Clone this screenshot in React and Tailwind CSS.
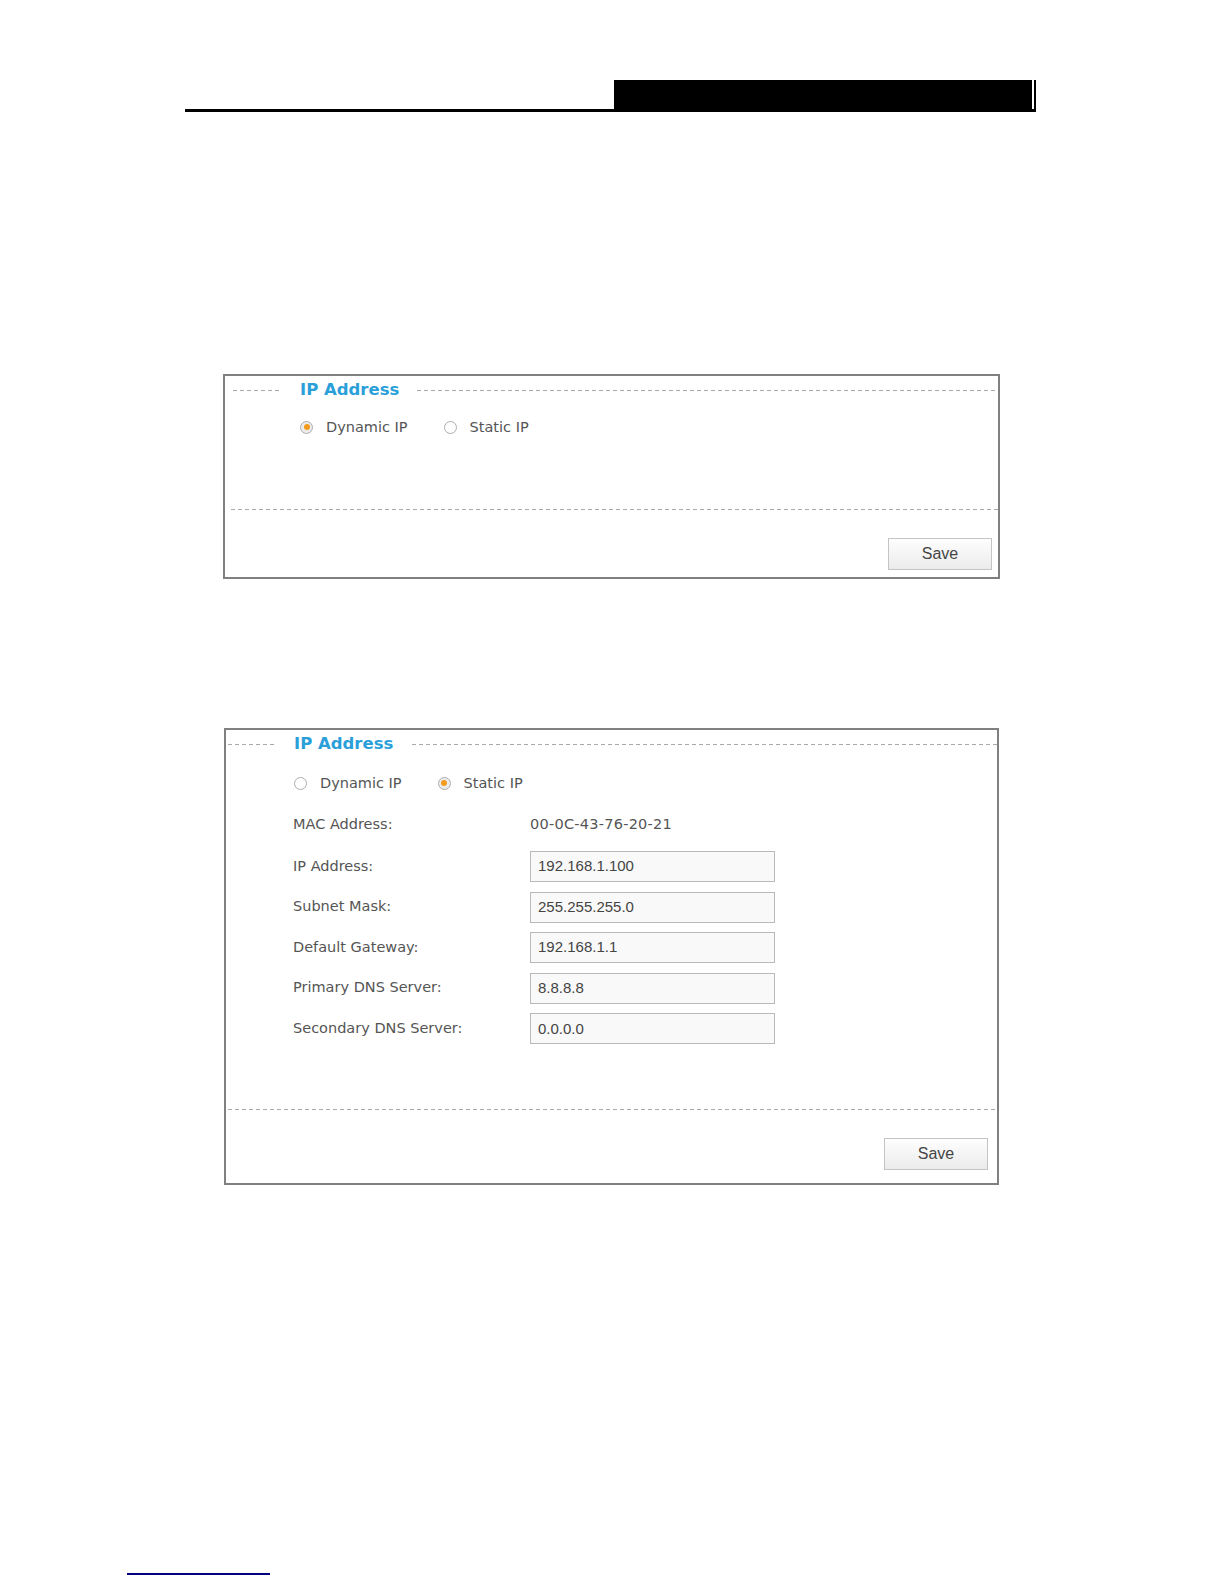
import React from "react";

const dash =
  "h-px bg-[repeating-linear-gradient(90deg,#a9a9a9_0_4px,transparent_4px_7px)]";

function Radio({ checked, label }) {
  return (
    <div className="flex items-center gap-[13px]">
      <span
        className={`flex h-[13px] w-[13px] items-center justify-center rounded-full border border-[#adadad] ${
          checked ? "bg-[#ececec]" : "bg-white"
        }`}
      >
        {checked && <span className="h-[6px] w-[6px] rounded-full bg-[#f29b1d]" />}
      </span>
      <span className="text-[14.5px] leading-5 text-[#555]">{label}</span>
    </div>
  );
}

function TitleBar({ lead, leftGap, title, rightGap }) {
  return (
    <div className="flex h-5 items-center">
      <div className={`${dash} w-[48px]`} style={{ marginLeft: lead }} />
      <span
        className="text-[16.5px] font-bold leading-5 text-[#2b9fd9]"
        style={{ marginLeft: leftGap, marginRight: rightGap }}
      >
        {title}
      </span>
      <div className={`${dash} flex-1`} />
    </div>
  );
}

function SaveButton({ className }) {
  return (
    <button
      className={`h-[32px] w-[104px] border border-[#c4c4c4] bg-gradient-to-b from-[#fefefe] to-[#ebebeb] font-['Liberation_Sans',Arial,sans-serif] text-[16px] text-[#454545] ${className}`}
    >
      Save
    </button>
  );
}

const fields = [
  ["IP Address:", "192.168.1.100"],
  ["Subnet Mask:", "255.255.255.0"],
  ["Default Gateway:", "192.168.1.1"],
  ["Primary DNS Server:", "8.8.8.8"],
  ["Secondary DNS Server:", "0.0.0.0"],
];

export default function App() {
  return (
    <div className="min-h-[1584px] w-[1224px] bg-white pt-[80px] font-['DejaVu_Sans',Verdana,sans-serif]">
      {/* Page header */}
      <div className="ml-[185px] flex w-[851px] justify-end border-b-[3px] border-black">
        <div className="h-[29px] w-[418px] bg-black" />
        <div className="ml-[2px] w-[2px] bg-black" />
      </div>

      {/* Dynamic IP panel */}
      <div className="ml-[223px] mt-[262px] flex w-[777px] flex-col border-2 border-[#808080] pt-[4px] pb-[7px]">
        <TitleBar lead={8} leftGap={19} title="IP Address" rightGap={18} />
        <div className="ml-[75px] mt-[17px] flex h-5 items-center gap-[36px]">
          <Radio checked label="Dynamic IP" />
          <Radio label="Static IP" />
        </div>
        <div className={`${dash} ml-[6px] mt-[72px]`} />
        <SaveButton className="mt-[28px] mr-[6px] self-end" />
      </div>

      {/* Static IP panel */}
      <div className="ml-[224px] mt-[149px] flex w-[775px] flex-col border-2 border-[#808080] pt-[4px] pb-[13px]">
        <TitleBar lead={2} leftGap={18} title="IP Address" rightGap={19} />
        <div className="ml-[68px] mt-[19px] flex h-5 items-center gap-[36px]">
          <Radio label="Dynamic IP" />
          <Radio checked label="Static IP" />
        </div>
        <div className="ml-[67px] mt-[22px] flex h-5 items-center text-[14.5px] text-[#555]">
          <span className="w-[237px]">MAC Address:</span>
          <span className="tracking-[0.25px]">00-0C-43-76-20-21</span>
        </div>
        <div className="ml-[67px] mt-[16px] flex flex-col gap-[9.6px]">
          {fields.map(([label, value]) => (
            <div key={label} className="flex items-center">
              <span className="w-[237px] text-[14.5px] text-[#555]">{label}</span>
              <div className="flex h-[31px] w-[245px] items-center border border-[#b9b9b9] bg-[#f9f9f9] pl-[7px] font-['Liberation_Sans',Arial,sans-serif] text-[15px] text-[#444]">
                {value}
              </div>
            </div>
          ))}
        </div>
        <div className={`${dash} ml-[2px] mt-[65px]`} />
        <SaveButton className="mt-[28px] mr-[9px] self-end" />
      </div>

      {/* Footnote rule */}
      <div className="ml-[127px] mt-[388px] h-[2px] w-[143px] bg-[#000080]" />
    </div>
  );
}
